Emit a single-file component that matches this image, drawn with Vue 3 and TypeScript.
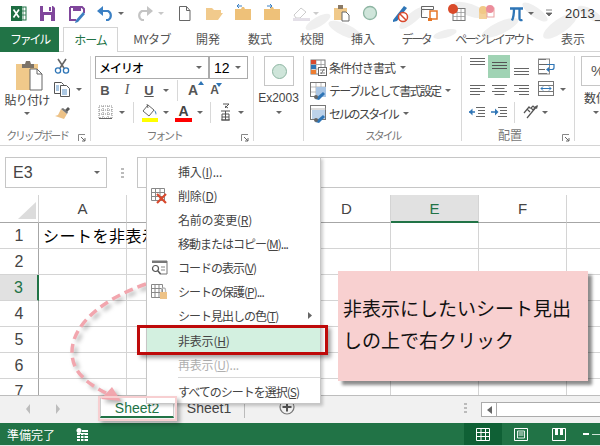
<script setup lang="ts">
interface MenuItem { label: string; key: string; tail?: string; icon?: string; sub?: boolean; cls?: string; divider?: boolean }
const tabs = [
  { t: 'MYタブ', c: 'tw1' }, { t: '開発', c: 'tw2' }, { t: '数式', c: 'tw3' }, { t: '校閲', c: 'tw4' },
  { t: '挿入', c: 'tw5' }, { t: 'データ', c: 'tw6' }, { t: 'ページ レイアウト', c: 'tw7' }, { t: '表示', c: 'tw8' },
]
const columns = ['A', 'B', 'C', 'D', 'E', 'F', 'G']
const rows = [1, 2, 3, 4, 5, 6, 7]
const menu: MenuItem[] = [
  { label: '挿入(', key: 'I', tail: ')...' },
  { label: '削除(', key: 'D', tail: ')', icon: 'del' },
  { label: '名前の変更(', key: 'R', tail: ')' },
  { label: '移動またはコピー(', key: 'M', tail: ')...', cls: 'tight' },
  { label: 'コードの表示(', key: 'V', tail: ')', icon: 'code', cls: 'tight' },
  { label: 'シートの保護(', key: 'P', tail: ')...', icon: 'lock', cls: 'tight' },
  { label: 'シート見出しの色(', key: 'T', tail: ')', sub: true, cls: 'tight' },
  { label: '非表示(', key: 'H', tail: ')', cls: 'hot' },
  { label: '再表示(', key: 'U', tail: ')...', cls: 'off', divider: true },
  { label: 'すべてのシートを選択(', key: 'S', tail: ')', cls: 'tight' },
]
</script>

<template>
  <div class="app">
    <header class="head">
      <svg class="leaves" width="600" height="52" viewBox="0 0 600 52">
        <g fill="#efefef">
          <ellipse cx="318" cy="22" rx="14" ry="5" transform="rotate(-30 318 22)" />
          <ellipse cx="345" cy="30" rx="18" ry="6" transform="rotate(25 345 30)" />
          <ellipse cx="412" cy="18" rx="16" ry="5" transform="rotate(-40 412 18)" />
          <ellipse cx="470" cy="10" rx="18" ry="6" transform="rotate(20 470 10)" />
          <ellipse cx="500" cy="28" rx="20" ry="6" transform="rotate(-25 500 28)" />
          <ellipse cx="535" cy="12" rx="15" ry="5" transform="rotate(35 535 12)" />
          <ellipse cx="560" cy="26" rx="20" ry="7" transform="rotate(-35 560 26)" />
          <ellipse cx="590" cy="14" rx="14" ry="5" transform="rotate(30 590 14)" />
          <ellipse cx="445" cy="34" rx="12" ry="4" transform="rotate(-15 445 34)" />
        </g>
      </svg>
      <div class="quick">
        <svg class="quick-icons" width="560" height="27" viewBox="0 0 560 27">
          <!-- excel -->
          <rect x="17" y="7" width="9" height="13" fill="#fff" stroke="#217346" />
          <path d="M20 7v13M23 7v13M17 11h9M17 15h9" stroke="#217346" stroke-width=".8" />
          <rect x="11" y="6" width="11" height="15" fill="#1e6d42" />
          <path d="M13.5 9.5l5.5 8M19 9.5l-5.5 8" stroke="#fff" stroke-width="1.7" />
          <!-- save -->
          <path d="M40 6h13l2 2v13H40z" fill="#80479c" />
          <rect x="43" y="6" width="9" height="6" fill="#fff" />
          <rect x="44" y="15" width="7" height="6" fill="#fff" />
          <rect x="49" y="7" width="2" height="4" fill="#80479c" />
          <!-- save as -->
          <path d="M70 7h12l2 2v4M70 7v13h6" fill="none" stroke="#80479c" stroke-width="2" />
          <rect x="73" y="6" width="8" height="5" fill="#80479c" />
          <path d="M76 20l7-8 2 2-7 8-3 1z" fill="#3d7fc0" />
          <!-- undo -->
          <path d="M100 11h8a5 5 0 0 1 0 9h-2" fill="none" stroke="#3b80c4" stroke-width="2.2" />
          <path d="M103 6l-6 5 6 5z" fill="#3b80c4" />
          <path d="M118 12h6l-3 3z" fill="#666" />
          <!-- redo -->
          <path d="M150 11h-8a5 5 0 0 0 0 9h2" fill="none" stroke="#c4c4c4" stroke-width="2.2" />
          <path d="M147 6l6 5-6 5z" fill="#c4c4c4" />
          <path d="M158 12h6l-3 3z" fill="#c8c8c8" />
          <!-- new -->
          <path d="M179.5 6.500h7l3.500 4v10h-10.500zM186.500 6.500v4h3.500" fill="#fff" stroke="#666" />
          <!-- folders -->
          <path d="M206 20V8h6l2 2h7v3h-10l-5 7zM206 20l5-7h12l-5 7z" fill="#f1ca8c" />
          <path d="M235 20V9h6l1-2h2l1 2h6v11z" fill="#eec179" />
          <path d="M238 6h4M239 4l-2 2 2 2" stroke="#3b80c4" fill="none" />
          <path d="M264 20V9h6l1-2h2l1 2h6v11z" fill="#eec179" />
          <path d="M267 6h4M270 4l2 2-2 2" stroke="#3b80c4" fill="none" />
          <!-- eraser -->
          <path d="M294 15l7-7 5 4-6 6h-4z" fill="#fff" stroke="#ccc" />
          <rect x="293" y="18" width="17" height="3" fill="#e4e0e8" />
          <path d="M313 12h6l-3 3z" fill="#ccc" />
          <!-- paste -->
          <path d="M334 8h13v12h-13z" fill="#f0c98a" />
          <rect x="338" y="5" width="5" height="4" fill="#8a7a66" />
          <path d="M342 12h4l3 3v6h-7z" fill="#fff" stroke="#666" />
          <!-- circle -->
          <circle cx="370" cy="13" r="6.500" fill="#cfe5da" stroke="#8db5a2" stroke-width="1.300" />
          <!-- pen -->
          <path d="M393 20l11-14 3 2-10 13-4 1z" fill="#2e75b6" />
          <circle cx="403" cy="17" r="4.500" fill="#fff" stroke="#d9492d" stroke-width="1.500" />
          <path d="M400 14l6 6" stroke="#d9492d" stroke-width="1.500" />
          <!-- doc -->
          <path d="M421.500 6.500h12v3h-12zM421.500 9.500v8h6" fill="none" stroke="#666" />
          <path d="M430 11h7v8h-7z" fill="#fff" stroke="#e67525" stroke-width="1.500" />
          <path d="M428 18h4v3h-4z" fill="#e67525" />
          <!-- table with red -->
          <rect x="453" y="8.500" width="12" height="12" fill="#fff" stroke="#777" />
          <path d="M453 12.500h12M453 16.500h12M457 9v11M461 9v11" stroke="#999" stroke-width=".8" />
          <circle cx="453" cy="9" r="5" fill="#d94a2a" />
          <!-- notes -->
          <rect x="479" y="9" width="8" height="10" fill="#f3d19a" />
          <circle cx="483" cy="10" r="4" fill="#f1c987" />
          <rect x="487" y="8" width="7" height="9" fill="#fff" stroke="#e9a0a0" />
          <circle cx="490" cy="9" r="4" fill="#ec8d9b" />
          <!-- pi -->
          <path d="M510 8.500h13M514 8.500c0 5-.5 9-2 12M519.500 8.500v10c0 1.500 1 2 3 1.500" fill="none" stroke="#2e75b6" stroke-width="2.300" />
          <path d="M528 12h6l-3 3z" fill="#666" />
          <!-- customize -->
          <path d="M546 10h6M546 13h6l-3 3z" fill="#666" stroke="#666" stroke-width=".8" />
        </svg>
        <span class="doc-name">2013_</span>
      </div>
      <nav class="tabs">
        <span class="tab file">ファイル</span>
        <span class="tab home">ホーム</span>
        <span v-for="t in tabs" :key="t.t" class="tab" :class="t.c">{{ t.t }}</span>
      </nav>
    </header>

    <section class="ribbon">
      <!-- clipboard -->
      <div class="group g-clip">
        <div class="clip-body">
          <div class="paste">
            <svg width="28" height="33" viewBox="0 0 28 33">
              <path d="M1 4h22v26H1z" fill="#f0c98a" />
              <path d="M7 4h3l1-3h4l1 3h3v4H7z" fill="#7c7368" />
              <path d="M15 9h7l5 5v16H15z" fill="#fff" stroke="#666" />
              <path d="M22 9v5h5" fill="none" stroke="#666" />
            </svg>
            <span class="paste-text">貼り付け</span>
            <i class="caret" />
          </div>
          <div class="clip-tools">
            <svg width="16" height="16" viewBox="0 0 16 16">
              <path d="M4 1l6 9M12 1L6 10" stroke="#666" stroke-width="1.600" />
              <circle cx="4" cy="12.500" r="2.600" fill="none" stroke="#2e75b6" stroke-width="1.300" />
              <circle cx="12" cy="12.500" r="2.600" fill="none" stroke="#2e75b6" stroke-width="1.300" />
            </svg>
            <div class="tool-row">
              <svg width="16" height="15" viewBox="0 0 16 15">
                <path d="M.5.500h7l2 2v9H.500z" fill="#fff" stroke="#555" />
                <path d="M6.500 3.500h6l3 3v8h-9z" fill="#fff" stroke="#555" />
                <path d="M2 4h3M2 6h3M2 8h3M8 8h5M8 10h5M8 12h5" stroke="#2e75b6" stroke-width=".8" />
              </svg>
              <i class="caret cl" />
            </div>
            <svg width="17" height="15" viewBox="0 0 17 15">
              <path d="M11 5l3-3 2 2-3 3z" fill="#555" />
              <path d="M7 4l6 5-3 5-9-3 3-1z" fill="#edc287" />
              <path d="M7 4l2-1 5 4-1 2z" fill="#777" />
            </svg>
          </div>
        </div>
        <div class="g-label kana fixed-bottom">クリップボード<svg class="launch" width="8" height="8" viewBox="0 0 8 8"><path d="M.5 7V.500H7" fill="none" stroke="#888" /><path d="M3 3l4 4M7 4v3H4" fill="none" stroke="#666" /></svg></div>
      </div>

      <!-- font -->
      <div class="group g-font">
        <div class="combos">
          <span class="combo c-name">メイリオ<i class="caret" /></span>
          <span class="combo c-size">12<i class="caret" /></span>
        </div>
        <div class="font-row r2">
          <b class="fmt f-b">B</b>
          <em class="fmt f-i">I</em>
          <u class="fmt f-u">U</u>
          <i class="caret" />
          <span class="vsep s1" />
          <span class="grow-a big">A<svg class="tip" width="6" height="4" viewBox="0 0 6 4"><path d="M0 4l3-4 3 4z" fill="#2e75b6" /></svg></span>
          <span class="grow-a small">A<svg class="tip" width="6" height="4" viewBox="0 0 6 4"><path d="M0 0l3 4 3-4z" fill="#2e75b6" /></svg></span>
        </div>
        <div class="font-row r3">
          <svg class="i-border" width="15" height="14" viewBox="0 0 15 14">
            <path d="M1 1h13v12H1zM1 5h13M1 9h13M5 1v12M10 1v12" fill="none" stroke="#888" stroke-dasharray="1 1" />
            <path d="M1 13.500h13" stroke="#666" />
          </svg>
          <i class="caret" />
          <span class="vsep s2" />
          <svg class="i-fill" width="18" height="19" viewBox="0 0 18 19">
            <path d="M2 8l5-6 6 5-5 6z" fill="#fff" stroke="#666" />
            <path d="M6 1l1 4" stroke="#666" />
            <path d="M13 7c2 1 3 3 2 5l-1-3z" fill="#2e75b6" />
            <rect x="1" y="15" width="16" height="4" fill="#ffff00" />
          </svg>
          <i class="caret cf" />
          <span class="i-color">A</span>
          <i class="caret cf2" />
          <span class="vsep s3" />
          <svg class="i-phon" width="11" height="18" viewBox="0 0 11 18">
            <path d="M3 1h6L5 5M5 3l3 2" fill="none" stroke="#555" />
            <path d="M1 8h9M1 17h9M5.500 8v9M2 11h7v6H2zM2 14h7" fill="none" stroke="#555" />
          </svg>
          <i class="caret cp" />
        </div>
        <div class="g-label kana fixed-bottom pr16">フォント<svg class="launch" width="8" height="8" viewBox="0 0 8 8"><path d="M.5 7V.500H7" fill="none" stroke="#888" /><path d="M3 3l4 4M7 4v3H4" fill="none" stroke="#666" /></svg></div>
      </div>

      <!-- ex2003 -->
      <div class="group g-ex">
        <span class="ex-box"><i class="dot" /></span>
        <span class="ex-text">Ex2003</span>
        <i class="caret" />
      </div>

      <!-- style -->
      <div class="group g-style">
        <div class="style-row">
          <svg width="17" height="17" viewBox="0 0 17 17">
            <rect x="1" y="1" width="14" height="14" fill="#fff" stroke="#777" />
            <path d="M1 5.500h14M1 10h14M6 1v14M11 1v14" stroke="#999" stroke-width=".8" />
            <rect x="1" y="1" width="5" height="4" fill="#d9492d" />
            <rect x="1" y="6" width="5" height="4" fill="#2e75b6" />
            <rect x="1" y="11" width="5" height="4" fill="#ed7d31" />
            <rect x="8.500" y="8.500" width="8" height="8" fill="#fff" stroke="#666" />
            <path d="M10 11h5M10 14h5M14 10l-3 5" stroke="#666" stroke-width=".8" />
          </svg>
          <span>条件付き書式</span><i class="caret" />
        </div>
        <div class="style-row tight2">
          <svg width="17" height="18" viewBox="0 0 17 18">
            <rect x=".5" y=".5" width="15" height="14" fill="#fff" stroke="#777" />
            <path d="M1 5h15M1 10h15M6 1v14M11 1v14" stroke="#aaa" stroke-width=".8" />
            <path d="M6 5h10v10H6z" fill="#a9c5e4" />
            <path d="M5 17l8-7 2 2-6 6z" fill="#2e75b6" />
            <circle cx="6" cy="15" r="2" fill="#666" />
          </svg>
          <span>テーブルとして書式設定</span><i class="caret" />
        </div>
        <div class="style-row tight3">
          <svg width="17" height="18" viewBox="0 0 17 18">
            <rect x=".5" y=".5" width="15" height="14" fill="#fff" stroke="#777" />
            <path d="M1 4h15" stroke="#aaa" stroke-width=".8" />
            <path d="M2 5h13v9H2z" fill="#bcd2ea" />
            <path d="M5 17l8-7 2 2-6 6z" fill="#2e75b6" />
            <circle cx="6" cy="15" r="2" fill="#666" />
          </svg>
          <span>セルのスタイル</span><i class="caret" />
        </div>
        <div class="g-label kana fixed-bottom">スタイル</div>
      </div>

      <!-- align -->
      <div class="group g-align">
        <div class="align-row first">
          <span class="al"><svg width="15" height="22" viewBox="0 0 15 22"><path d="M0 3.500h15M0 6.500h15M0 9.500h15" stroke="#666" /></svg></span>
          <span class="al on"><svg width="15" height="22" viewBox="0 0 15 22"><path d="M0 7.500h15M0 10.500h15M0 13.500h15" stroke="#555" /></svg></span>
          <span class="al"><svg width="15" height="22" viewBox="0 0 15 22"><path d="M0 13.500h15M0 16.500h15M0 19.500h15" stroke="#666" /></svg></span>
          <svg class="wrap w1" width="17" height="17" viewBox="0 0 17 17">
            <path d="M1 1.500h7M1 6.500h11M1 11.500h6M1 15.500h8" stroke="#666" fill="none" />
            <rect x=".5" y="1" width="11" height="15" fill="none" stroke="#888" />
            <path d="M9 6.500h7v3a2 2 0 0 1-2 2H9" fill="none" stroke="#2e75b6" stroke-width="1.200" />
            <path d="M11 9l-3 2.500 3 2.500z" fill="#2e75b6" />
          </svg>
        </div>
        <div class="align-row second">
          <span class="al"><svg width="15" height="11" viewBox="0 0 15 11"><path d="M0 .500h15M0 3.500h10M0 6.500h15M0 9.500h10" stroke="#666" /></svg></span>
          <span class="al"><svg width="15" height="11" viewBox="0 0 15 11"><path d="M0 .500h15M2.500 3.500h10M0 6.500h15M2.500 9.500h10" stroke="#666" /></svg></span>
          <span class="al"><svg width="15" height="11" viewBox="0 0 15 11"><path d="M0 .500h15M5 3.500h10M0 6.500h15M5 9.500h10" stroke="#666" /></svg></span>
          <svg class="wrap w2" width="16" height="15" viewBox="0 0 16 15">
            <rect x=".5" y=".5" width="15" height="14" fill="none" stroke="#777" />
            <path d="M1 4.500h14M1 10.500h14" stroke="#777" />
            <path d="M3 7.500h10M5 5.500l-2 2 2 2M11 5.500l2 2-2 2" fill="none" stroke="#2e75b6" />
          </svg>
          <i class="caret cm" />
        </div>
        <div class="align-row third">
          <svg class="ind1" width="16" height="11" viewBox="0 0 16 11"><path d="M7 .500h9M9 3.500h7M9 6.500h7M7 9.500h9" stroke="#666" /><path d="M0 5h6" stroke="#2e75b6" stroke-width="1.500" /><path d="M3.500 1.500L0 5l3.500 3.500z" fill="#2e75b6" /></svg>
          <svg class="ind2" width="16" height="11" viewBox="0 0 16 11"><path d="M7 .500h9M9 3.500h7M9 6.500h7M7 9.500h9" stroke="#666" /><path d="M0 5h6" stroke="#2e75b6" stroke-width="1.500" /><path d="M4 1.500L7.500 5 4 8.500z" fill="#2e75b6" /></svg>
          <span class="vsep s4" />
          <svg class="orient" width="16" height="16" viewBox="0 0 16 16">
            <path d="M14 2L4 14" stroke="#555" stroke-width="1.200" />
            <path d="M15 1l-1 4-3-2z" fill="#555" />
            <path d="M1 9l5-6 1.500 1.500M4 5l3 3M8 4l2-2 2 2-2 2-2-2" fill="none" stroke="#555" stroke-width="1.200" />
          </svg>
          <i class="caret co" />
        </div>
        <div class="g-label fixed-bottom pr16 plain-label">配置<svg class="launch" width="8" height="8" viewBox="0 0 8 8"><path d="M.5 7V.500H7" fill="none" stroke="#888" /><path d="M3 3l4 4M7 4v3H4" fill="none" stroke="#666" /></svg></div>
      </div>

      <!-- number -->
      <div class="g-num">
        <span class="num-box">%</span>
        <span class="num-text">数値</span>
        <i class="caret" />
      </div>
    </section>

    <section class="formula">
      <div class="namebox"><span>E3</span><i class="caret" /></div>
      <span class="fdots" />
      <div class="fbox" />
    </section>

    <section class="sheet">
      <div class="cell corner"><svg width="18" height="17" viewBox="0 0 18 17"><path d="M18 0v17H0z" fill="#dcdcdc" /></svg></div>
      <div v-for="c in columns" :key="c" class="cell col-h" :class="{ sel: c === 'E' }">{{ c }}</div>
      <template v-for="r in rows" :key="r">
        <div class="cell row-h" :class="{ sel: r === 3 }">{{ r }}</div>
        <div v-for="c in columns" :key="c" class="cell body">
          <span v-if="r === 1 && c === 'A'" class="a1">シートを非表示</span>
        </div>
      </template>
    </section>

    <section class="sheetbar">
      <svg class="nav" width="36" height="10" viewBox="0 0 36 10"><path d="M4 0L0 5l4 5zM30 0l4 5-4 5z" fill="#bdbdbd" /></svg>
      <span class="stab active">Sheet2</span>
      <span class="stab plain">Sheet1</span>
      <svg class="plus" width="16" height="16" viewBox="0 0 16 16"><circle cx="8" cy="8" r="7" fill="none" stroke="#777" stroke-width="1.200" /><path d="M8 3.500v9M3.500 8h9" stroke="#555" stroke-width="2" /></svg>
      <span class="bdots" />
      <div class="hscroll"><span class="hleft"><svg width="5" height="8" viewBox="0 0 5 8"><path d="M5 0L0 4l5 4z" fill="#666" /></svg></span></div>
    </section>

    <footer class="status">
      <span class="ready">準備完了</span>
      <svg class="macro" width="13" height="13" viewBox="0 0 13 13"><circle cx="3" cy="2.500" r="2.500" fill="#fff" /><path d="M1 5h11v8H1zM6 2h6v2H6z" fill="#fff" /><path d="M1 7.500h11M1 10.500h11M4.500 6v7M8 6v7" stroke="#217346" /></svg>
      <span class="view on"><svg width="14" height="13" viewBox="0 0 14 13"><path d="M.5.500h13v12H.500zM.5 4.500h13M.5 8.500h13M5 .500v12M9.500 .500v12" fill="none" stroke="#fff" /></svg></span>
      <span class="view"><svg width="14" height="13" viewBox="0 0 14 13"><path d="M.5.500h13v12H.500z" fill="none" stroke="#fff" /><path d="M3.500 3h7v7h-7zM4.500 5h5M4.500 7h5" fill="none" stroke="#fff" stroke-width=".9" /></svg></span>
      <span class="view"><svg width="14" height="13" viewBox="0 0 14 13"><path d="M.5.500h13v12H.500z" fill="none" stroke="#fff" /><path d="M3 1h3v6H3zM8 1h3v6H8z" fill="#fff" /></svg></span>
      <span class="zoomer"><i class="minus" /><i class="track" /></span>
    </footer>

    <!-- overlays -->
    <svg class="arrow" width="160" height="150" viewBox="0 0 160 150">
      <path d="M146 4C100 20 72 46 72 72C72 90 84 102 106 113" fill="none" stroke="#f2a6ae" stroke-width="3.500" stroke-dasharray="9 5" />
      <path d="M112 107l-11 12 20 2z" fill="#f2a6ae" />
    </svg>

    <div class="menu">
      <template v-for="m in menu" :key="m.key">
        <div class="item" :class="m.cls">
          <span class="mi">
            <svg v-if="m.icon === 'del'" width="17" height="17" viewBox="0 0 17 17">
              <path d="M.5 1.500h13v12H.500zM.5 5.500h13M.5 9.500h13M4.500 1.500v12M9 1.500v12" fill="none" stroke="#888" />
              <path d="M6 7l9 9M15 7l-9 9" stroke="#d9492d" stroke-width="2.200" />
            </svg>
            <svg v-else-if="m.icon === 'code'" width="17" height="15" viewBox="0 0 17 15">
              <path d="M1 1h15v13H9" fill="none" stroke="#777" />
              <path d="M1 1h15v2H1z" fill="#777" />
              <circle cx="4.500" cy="8.500" r="3" fill="none" stroke="#555" stroke-width="1.200" />
              <path d="M7 11l2.500 3" stroke="#555" stroke-width="1.500" />
              <path d="M10 7h4M10 10h4" stroke="#888" />
            </svg>
            <svg v-else-if="m.icon === 'lock'" width="17" height="17" viewBox="0 0 17 17">
              <path d="M.5 1.500h11v13H.500zM.5 5.500h11M.5 9.500h11M4 1.500v13M8 1.500v13" fill="none" stroke="#888" />
              <rect x="9" y="9" width="7" height="7" fill="#edc287" />
              <path d="M10.500 9V7a2 2 0 0 1 4 0v2" fill="none" stroke="#b8b8b8" stroke-width="1.300" />
            </svg>
          </span>
          <span>{{ m.label }}<u>{{ m.key }}</u>{{ m.tail }}</span>
          <svg v-if="m.sub" class="chev" width="4" height="7" viewBox="0 0 4 7"><path d="M0 0l4 3.500L0 7z" fill="#666" /></svg>
        </div>
        <div v-if="m.divider" class="divider" />
      </template>
    </div>

    <div class="redbox" />
    <div class="pinkbox" />
    <div class="callout">非表示にしたいシート見出<br />しの上で右クリック</div>
  </div>
</template>

<style scoped>
.app { position: relative; width: 600px; height: 446px; overflow: hidden; background: #fff; color: #444; font-family: "Noto Sans CJK JP", "Noto Sans", sans-serif; font-size: 12px; }
.caret { display: inline-block; flex: none; width: 0; height: 0; border: 3px solid transparent; border-top: 3px solid #666; border-bottom: 0; }

.head { position: relative; height: 52px; border-bottom: 1px solid #d4d4d4; box-sizing: border-box; }
.leaves { position: absolute; left: 0; top: 0; }
.quick { position: relative; display: flex; height: 27px; }
.quick-icons { flex: none; }
.doc-name { margin-left: 5px; font: 13px/27px "Liberation Sans", sans-serif; color: #333; letter-spacing: .3px; }
.tabs { position: relative; display: flex; height: 24px; }
.tab { flex: none; line-height: 24px; text-align: center; color: #555; font-size: 12px; white-space: nowrap; }
.file { width: 59px; height: 25px; background: #217346; color: #fff; letter-spacing: -2.3px; }
.home { margin-left: 4px; width: 55px; height: 25px; background: #fff; color: #217346; border: 1px solid #d4d4d4; border-bottom: 0; box-sizing: border-box; letter-spacing: -1px; }
.tw1 { margin-left: 6px; width: 56px; letter-spacing: -.6px; }
.tw2 { margin-left: 6px; width: 44px; }
.tw3 { margin-left: 8px; width: 44px; }
.tw4 { margin-left: 8px; width: 44px; }
.tw5 { margin-left: 7px; width: 44px; }
.tw6 { margin-left: 6px; width: 50px; letter-spacing: -2.3px; }
.tw7 { margin-left: 8px; width: 90px; letter-spacing: -2.3px; }
.tw8 { margin-left: 12px; width: 44px; }

.ribbon { display: flex; height: 94px; border-bottom: 1px solid #d4d4d4; box-sizing: border-box; }
.group { position: relative; flex: none; margin-top: 4px; height: 85px; border-right: 1px solid #d8d8d8; box-sizing: border-box; }
.g-label { text-align: center; font-size: 11px; line-height: 16px; color: #777; white-space: nowrap; }
.kana { letter-spacing: -2.2px; }
.plain-label { font-size: 12px; }
.fixed-bottom { position: absolute; left: 0; right: 0; bottom: -2px; }
.pr16 { padding-right: 16px; }
.launch { position: absolute; right: 4px; bottom: 1px; }

.g-clip { width: 91px; }
.g-clip .g-label { padding-right: 16px; }
.clip-body { display: flex; padding-top: 4px; }
.paste { width: 54px; display: flex; flex-direction: column; align-items: center; color: #444; }
.paste svg { margin-left: 4px; }
.paste-text { font-size: 12px; line-height: 16px; margin: -1px 0 4px; letter-spacing: -.7px; white-space: nowrap; }
.clip-tools { display: flex; flex-direction: column; gap: 8px; margin-top: -2px; }
.tool-row { display: flex; align-items: center; }
.cl { margin-left: 6px; }

.g-font { width: 163px; padding-left: 4px; }
.combos { display: flex; height: 22px; }
.combo { display: flex; align-items: center; justify-content: space-between; border: 1px solid #ababab; height: 23px; box-sizing: border-box; padding: 0 6px 0 3px; color: #000; }
.c-name { width: 114px; font-size: 12px; font-weight: 500; letter-spacing: -1px; }
.c-size { width: 40px; margin-left: -1px; border-left-width: 2px; font: 14px "Liberation Sans", sans-serif; padding-left: 4px; }
.font-row { display: flex; align-items: center; }
.r2 { height: 20px; margin-top: 2px; }
.r3 { height: 22px; margin-top: 1px; }
.fmt { width: 22px; text-align: center; font: 14px "Liberation Serif", serif; color: #555; }
.f-b { font: bold 13px "Liberation Sans", sans-serif; margin-left: -1px; }
.f-i { font-style: italic; font-size: 14px; }
.f-u { font: bold 13px "Liberation Sans", sans-serif; }
.r2 .caret { margin-left: 3px; }
.vsep { flex: none; width: 1px; background: #d8d8d8; }
.s1 { height: 21px; margin-left: 8px; }
.grow-a { position: relative; color: #555; font-family: "Liberation Sans", sans-serif; font-weight: bold; }
.big { font-size: 14px; margin-left: 10px; }
.small { font-size: 12px; margin-left: 12px; }
.tip { position: absolute; top: -1px; right: -6px; }
.small .tip { right: -3px; top: 0; }
.i-border { margin-left: 3px; }
.r3 > .caret { margin-left: 6px; }
.s2 { height: 21px; margin-left: 8px; }
.i-fill { margin-left: 7px; }
.r3 > .cf { margin-left: 4px; }
.i-color { margin-left: 6px; width: 17px; height: 19px; text-align: center; font: bold 14px/16px "Liberation Sans", sans-serif; color: #444; border-bottom: 4px solid #ff0000; box-sizing: border-box; }
.r3 > .cf2 { margin-left: 5px; }
.s3 { height: 21px; margin-left: 7px; }
.i-phon { margin-left: 9px; }
.r3 > .cp { margin-left: 7px; }

.g-ex { width: 50px; display: flex; flex-direction: column; align-items: center; }
.ex-box { width: 30px; height: 30px; border: 1px solid #c6c6c6; box-sizing: border-box; display: flex; align-items: center; justify-content: center; margin-left: 1px; flex: none; }
.dot { width: 13px; height: 13px; border-radius: 50%; background: #cfe5da; border: 1px solid #8db5a2; }
.ex-text { font: 12px/16px "Liberation Sans", sans-serif; color: #444; margin-top: 4px; }
.g-ex .caret { margin-top: 5px; }

.g-style { width: 158px; padding-left: 6px; }
.style-row { display: flex; align-items: center; height: 23px; font-size: 12px; letter-spacing: -1px; color: #444; white-space: nowrap; }
.style-row svg { margin-right: 2px; flex: none; }
.style-row .caret { margin-left: 5px; }
.tight2 { letter-spacing: -1.8px; }
.tight3 { letter-spacing: -2.2px; }

.g-align { width: 113px; padding-left: 4px; }
.align-row { display: flex; align-items: flex-start; }
.first { height: 24px; margin-top: -1px; }
.al { width: 22px; display: flex; justify-content: center; flex: none; }
.al.on { background: #a0d3b4; height: 23px; }
.wrap { margin-left: 6px; flex: none; }
.w1 { margin-top: 3px; }
.w2 { margin-top: -4px; }
.second { margin-top: 6px; height: 11px; }
.cm { margin: 3px 0 0 6px; }
.third { margin-top: 8px; align-items: center; height: 16px; }
.ind1 { margin-left: 3px; }
.ind2 { margin-left: 6px; }
.s4 { height: 21px; margin-left: 7px; }
.orient { margin-left: 8px; }
.co { margin-left: 3px; }

.g-num { flex: none; width: 25px; box-sizing: border-box; margin-top: 4px; padding-left: 6px; overflow: hidden; display: flex; flex-direction: column; }
.num-box { flex: none; width: 40px; height: 30px; border: 1px solid #c6c6c6; box-sizing: border-box; font: 15px/28px "Liberation Sans", sans-serif; padding-left: 9px; color: #555; }
.num-text { flex: none; width: 40px; margin-top: 4px; line-height: 16px; font-size: 12px; padding-left: 3px; }
.g-num .caret { margin: 5px 0 0 12px; }

.formula { display: flex; align-items: flex-start; height: 49px; padding-top: 11px; box-sizing: border-box; }
.namebox { flex: none; margin-left: 5px; width: 102px; height: 31px; border: 1px solid #c6c6c6; box-sizing: border-box; display: flex; align-items: center; justify-content: space-between; padding: 0 6px 0 7px; font: 16px "Liberation Sans", sans-serif; color: #444; }
.fdots { flex: none; width: 3px; height: 10px; margin: 11px 13px 0 14px; background: repeating-linear-gradient(#bbb 0 2px, transparent 2px 4px); }
.fbox { flex: 1; height: 31px; border: 1px solid #c6c6c6; border-right: 0; box-sizing: border-box; }

.sheet { display: grid; grid-template-columns: 39px repeat(7, 88px); grid-template-rows: 28px repeat(7, 26px); height: 200px; overflow: hidden; width: 600px; }
.cell { box-sizing: border-box; min-width: 0; }
.corner { display: flex; align-items: flex-end; justify-content: flex-end; padding: 0 2px 3px 0; border-bottom: 1px solid #a6a6a6; border-right: 1px solid #d4d4d4; }
.col-h { font: 15px/28px "Liberation Sans", sans-serif; text-align: center; color: #444; border-right: 1px solid #d4d4d4; border-bottom: 1px solid #a6a6a6; }
.col-h.sel { background: #e1e1e1; color: #217346; border-bottom: 2px solid #217346; line-height: 27px; }
.row-h { font: 16px/25px "Liberation Sans", sans-serif; text-align: center; color: #444; border-right: 1px solid #a6a6a6; border-bottom: 1px solid #d4d4d4; }
.row-h.sel { background: #e1e1e1; color: #217346; border-right: 2px solid #217346; }
.body { border-right: 1px solid #d4d4d4; border-bottom: 1px solid #d4d4d4; position: relative; }
.a1 { display: block; white-space: nowrap; padding-left: 4px; font-size: 16px; line-height: 25px; color: #000; letter-spacing: .5px; }

.sheetbar { display: flex; height: 28px; background: #f1f1f1; border-top: 1px solid #bdbdbd; box-sizing: border-box; position: relative; }
.nav { margin: 8px 0 0 26px; flex: none; }
.stab { flex: none; height: 22px; text-align: center; font: 14px/25px "Liberation Sans", sans-serif; color: #444; box-sizing: border-box; }
.stab.active { margin-left: 38px; width: 74px; background: #fff; color: #217346; border-bottom: 2px solid #217346; border-left: 1px solid #ccc; border-right: 1px solid #ccc; }
.stab.plain { width: 71px; border-right: 1px solid #bbb; }
.plus { margin: 3px 0 0 34px; flex: none; }
.bdots { flex: none; width: 3px; height: 12px; margin: 7px 0 0 169px; background: repeating-linear-gradient(#bbb 0 2px, transparent 2px 4px); }
.hscroll { flex: 1; margin: 6px 0 0 14px; height: 15px; background: #fff; border: 1px solid #ababab; border-right: 0; box-sizing: border-box; display: flex; }
.hleft { width: 15px; display: flex; align-items: center; justify-content: center; border-right: 1px solid #ababab; box-sizing: border-box; }

.status { display: flex; align-items: center; height: 23px; background: #217346; border-bottom: 1px solid #e4e4e4; box-sizing: border-box; color: #fff; }
.ready { flex: none; margin-left: 7px; font-size: 12px; width: 50px; white-space: nowrap; }
.macro { flex: none; margin-left: 19px; }
.view { width: 38px; height: 22px; display: flex; align-items: center; justify-content: center; flex: none; }
.view.on { margin-left: 375px; background: #0f6035; }
.zoomer { flex: none; display: flex; align-items: center; margin-left: 5px; }
.minus { width: 6px; height: 2px; background: #fff; margin-right: 3px; }
.track { width: 12px; height: 1px; background: #cde3d6; }

.arrow { position: absolute; left: 0; top: 280px; filter: drop-shadow(3px 3px 2px rgba(0,0,0,.3)); }
.menu { position: absolute; left: 146px; top: 157px; width: 175px; height: 247px; background: #fff; border: 1px solid #c6c6c6; box-sizing: border-box; padding-top: 1px; box-shadow: 2px 2px 3px rgba(0,0,0,.2); }
.item { display: flex; align-items: center; height: 24px; font-size: 12px; color: #444; white-space: nowrap; position: relative; letter-spacing: -.2px; }
.tight { letter-spacing: -1px; }
.mi { flex: none; width: 31px; padding-left: 4px; box-sizing: border-box; display: flex; align-items: center; }
.hot { background: #d3f0e0; margin-top: 1px; }
.off { color: #b0b0b0; }
.chev { position: absolute; right: 8px; top: 9px; }
.divider { height: 1px; margin: 1px 0 1px 31px; background: #d8d8d8; }
.redbox { position: absolute; left: 137px; top: 325px; width: 191px; height: 30px; border: 3px solid #be0a0a; box-sizing: border-box; box-shadow: 3px 3px 4px rgba(0,0,0,.35); }
.pinkbox { position: absolute; left: 98px; top: 396px; width: 79px; height: 25px; border: 2px solid #f7cfd1; box-sizing: border-box; box-shadow: 3px 3px 4px rgba(0,0,0,.3); }
.callout { position: absolute; left: 338px; top: 271px; width: 250px; height: 110px; box-sizing: border-box; padding: 21px 0 0 5px; background: #f8d0d0; color: #111; font-size: 19px; line-height: 32px; box-shadow: 4px 4px 3px rgba(0,0,0,.45); white-space: nowrap; }
</style>
